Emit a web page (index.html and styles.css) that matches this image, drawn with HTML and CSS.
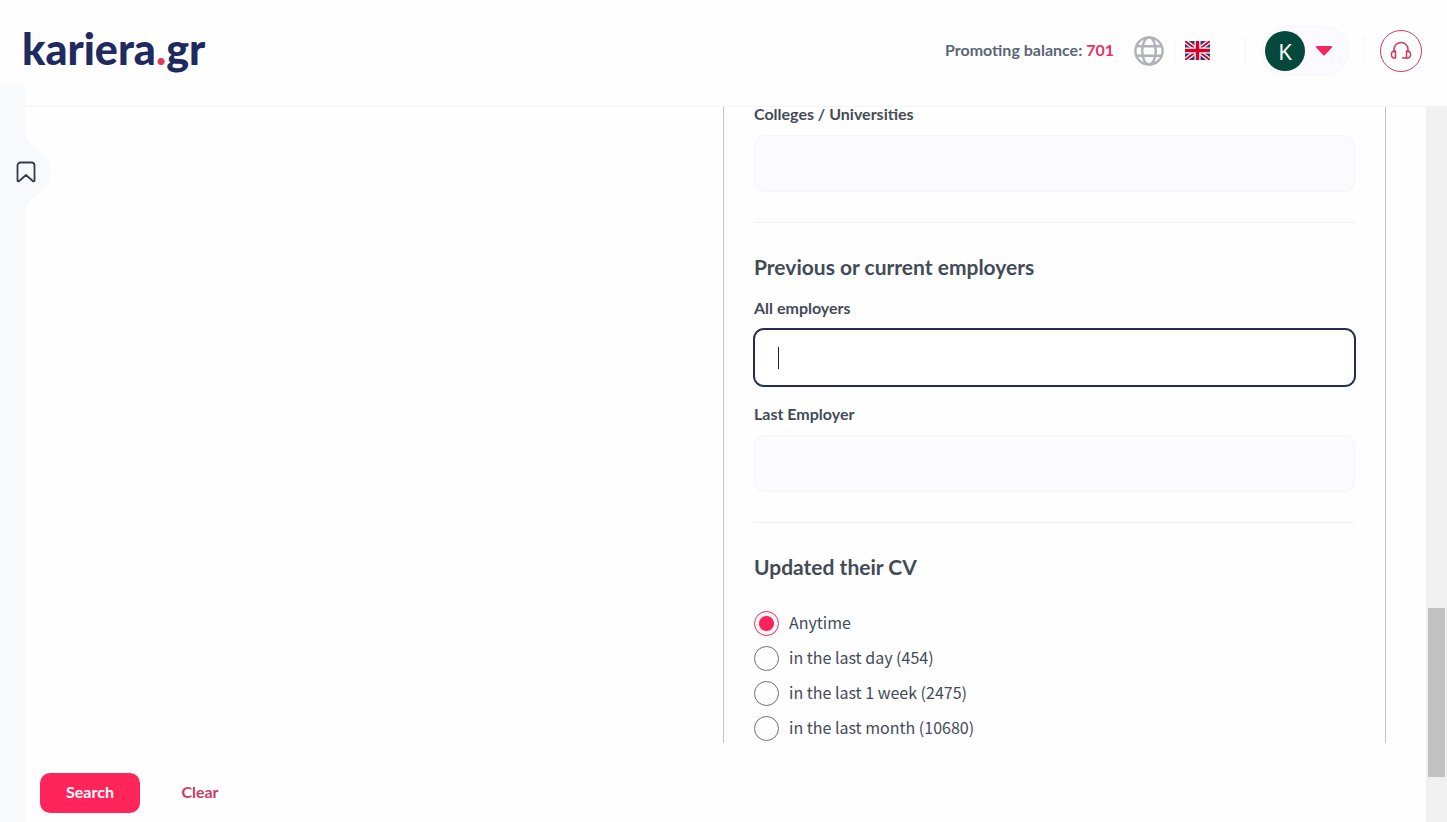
FILE: index.html
```
<!DOCTYPE html>
<html lang="en">
<head>
  <meta charset="UTF-8" />
  <meta name="viewport" content="width=device-width, initial-scale=1.0" />
  <title>CV Search - kariera.gr</title>
  <link rel="stylesheet" href="styles.css">
</head>
<body>
  <header class="header">
    <a href="#" class="logo">kariera<span class="logo-dot">.</span>gr</a>
    <div class="header-actions">
      <p class="balance">Promoting balance: <span class="balance-value">701</span></p>
      <div class="languages">
        <svg class="globe" viewBox="0 0 30 30" fill="none" stroke="#b0b1b9" stroke-width="2.4">
          <circle cx="15" cy="15" r="13.6" />
          <ellipse cx="15" cy="15" rx="6.8" ry="13.6" />
          <path d="M2.5 10.3h25M2.5 19.7h25" />
        </svg>
        <span class="divider"></span>
        <button class="icon-btn" aria-label="English">
          <svg class="flag" viewBox="0 0 50 38">
            <rect width="50" height="38" fill="#2b3a78" />
            <path d="M0 0L50 38M50 0L0 38" stroke="#fff" stroke-width="9" />
            <path d="M0 0L50 38M50 0L0 38" stroke="#d80027" stroke-width="4" />
            <path d="M25 0V38M0 19H50" stroke="#fff" stroke-width="12" />
            <path d="M25 0V38M0 19H50" stroke="#d80027" stroke-width="7" />
          </svg>
        </button>
      </div>
      <div class="account">
        <span class="divider"></span>
        <button class="profile" aria-label="Profile menu">
          <span class="avatar">K</span>
          <svg class="arrow" viewBox="0 0 18 10"><path d="M2 1h14L9 8.500z" fill="#f0285c" stroke="#f0285c" stroke-width="2" stroke-linejoin="round" /></svg>
        </button>
      </div>
      <div class="help">
        <span class="divider"></span>
        <button class="support" aria-label="Support">
          <svg class="headset" viewBox="0 0 22 20" fill="none" stroke="#cf3a62" stroke-width="1.500" stroke-linecap="round" stroke-linejoin="round">
            <path d="M4 11V8.500a7 7 0 0 1 14 0V11" />
            <path d="M5.500 10v7H4.500a3 3 0 0 1-3-3.500a3 3 0 0 1 3-3.500zM16.500 10v7H17.500a3 3 0 0 0 3-3.500a3 3 0 0 0-3-3.500z" />
            <path d="M16.500 17H12.500" />
          </svg>
        </button>
      </div>
    </div>
  </header>

  <div class="layout">
    <aside class="rail">
      <button class="saved" aria-label="Saved searches">
        <svg class="saved-shape" viewBox="0 0 26 86"><path d="M0 0C0 22 26 20 26 43S0 64 0 86z" fill="#f8f9fd" /></svg>
        <svg class="bookmark" viewBox="0 0 20 22" fill="none" stroke="#343c4c" stroke-width="1.800" stroke-linejoin="round"><path d="M4.500 1.500h11a3 3 0 0 1 3 3v15.300q-.6 1.200-1.700.2L10 14l-6.800 6q-1.100 1-1.700-.2V4.500a3 3 0 0 1 3-3z" /></svg>
      </button>
    </aside>

    <form class="search">
      <div class="search-body">
        <div class="search-main">
          <div class="columns">
            <div class="panel">
              <div class="field">
                <label for="colleges">Colleges / Universities</label>
                <input type="text" id="colleges" />
              </div>
              <hr>
              <h2>Previous or current employers</h2>
              <div class="field">
                <label for="all-employers">All employers</label>
                <input type="text" id="all-employers" class="active" />
              </div>
              <div class="field">
                <label for="last-employer">Last Employer</label>
                <input type="text" id="last-employer" />
              </div>
              <hr>
              <h2>Updated their CV</h2>
              <div class="options">
                <label class="option"><input type="radio" name="updated" checked /> Anytime</label>
                <label class="option"><input type="radio" name="updated" /> in the last day (454)</label>
                <label class="option"><input type="radio" name="updated" /> in the last 1 week (2475)</label>
                <label class="option"><input type="radio" name="updated" /> in the last month (10680)</label>
              </div>
            </div>
          </div>
          <div class="buttons">
            <button type="submit" class="btn">Search</button>
            <button type="reset" class="btn btn-clear">Clear</button>
          </div>
        </div>
        <div class="scrollbar"><div class="thumb"></div></div>
      </div>
    </form>
  </div>
</body>
</html>
```
FILE: styles.css
```
* {
  box-sizing: border-box;
}
body {
  margin: 0;
  height: 100vh;
  display: flex;
  flex-direction: column;
  overflow: hidden;
  font-family: Lato, sans-serif;
  font-weight: 700;
  background: #fefefe;
  color: #434b57;
}
button {
  font: inherit;
  border: none;
  background: none;
  padding: 0;
  cursor: pointer;
}
svg {
  display: block;
}

/* header */
.header {
  display: flex;
  align-items: center;
  justify-content: space-between;
  height: 85px;
  padding: 16px 25px 0 22px;
}
.logo {
  padding-bottom: 4px;
  font-size: 43px;
  line-height: 50px;
  font-weight: 900;
  color: #202a5e;
  text-decoration: none;
}
.logo-dot {
  color: #e0385f;
}
.header-actions, .languages, .account, .help {
  display: flex;
  align-items: center;
}
.balance {
  margin: 0 20px 0 0;
  padding-bottom: 3px;
  font-size: 16px;
  color: #5a6776;
}
.balance-value {
  color: #e8315f;
}
.divider {
  width: 1px;
  height: 30px;
  background: #f5f5f8;
}
.languages {
  gap: 10px;
  margin-right: 35px;
}
.globe {
  width: 30px;
  height: 30px;
}
.flag {
  width: 25px;
  height: 19px;
}
.account {
  gap: 15px;
  margin-right: 15px;
}
.profile {
  display: flex;
  align-items: center;
  gap: 10px;
  width: 88px;
  height: 50px;
  padding-left: 3px;
  border: 1px solid #f6f6fb;
  border-radius: 25px;
  background: #fafaff;
}
.avatar {
  width: 40px;
  height: 40px;
  border-radius: 50%;
  background: #04493b;
  color: #fff;
  font: 400 22px/40px "Noto Sans", sans-serif;
}
.arrow {
  width: 18px;
  height: 10px;
}
.help {
  gap: 15px;
}
.support {
  display: flex;
  align-items: center;
  justify-content: center;
  width: 42px;
  height: 42px;
  border: 1px solid #cf3a62;
  border-radius: 50%;
}
.headset {
  width: 22px;
  height: 20px;
}

/* left rail */
.layout {
  flex: 1;
  display: flex;
  min-height: 0;
}
.rail {
  position: relative;
  width: 25px;
  background: #f8f9fd;
}
.saved {
  position: absolute;
  top: 44px;
  left: 0;
  width: 51px;
  height: 86px;
}
.saved-shape {
  position: absolute;
  top: 0;
  right: 0;
  width: 26px;
  height: 86px;
}
.bookmark {
  position: relative;
  width: 20px;
  height: 22px;
  margin-left: 16px;
}

/* search form */
.search {
  flex: 1;
  display: flex;
  min-width: 0;
  padding-top: 21px;
}
.search-body {
  flex: 1;
  display: flex;
  min-width: 0;
  border-top: 1px solid #f5f5f8;
}
.search-main {
  flex: 1;
  display: flex;
  flex-direction: column;
}
.columns {
  flex: 1;
  min-height: 0;
  display: grid;
  grid-template-columns: 1fr 1fr;
  gap: 20px;
  padding: 0 40px 0 15px;
}
.panel {
  grid-column: 2;
  padding: 0 30px;
  border: solid #c4c4c6;
  border-width: 0 1px;
}
.field + .field {
  margin-top: 21px;
}
.field label {
  display: block;
  margin-bottom: 14px;
  font-size: 16px;
  line-height: 14px;
}
.field input {
  display: block;
  width: 100%;
  height: 57px;
  padding: 0 23px;
  border: 1px solid #f5f5fb;
  border-radius: 10px;
  background: #fafaff;
  font: 400 16px "Noto Sans CJK SC", sans-serif;
}
/* focused box with its text cursor */
.field .active {
  border-color: #242c4e;
  background: linear-gradient(#222, #222) 23px center / 1px 22px no-repeat #fff;
  box-shadow: 0 0 0 1px #242c4e;
}
hr {
  height: 1px;
  margin: 30px 0 32px;
  border: none;
  background: #f0f0f4;
}
h2 {
  margin: 0 0 22px;
  font-size: 21px;
  line-height: 24px;
}
.options {
  display: flex;
  flex-direction: column;
  gap: 10px;
  margin-top: 32px;
}
.option {
  display: flex;
  align-items: flex-start;
  gap: 10px;
  height: 25px;
  font: 400 16px/22px "Noto Sans CJK SC", sans-serif;
}
.option input {
  appearance: none;
  width: 25px;
  height: 25px;
  margin: 0;
  border: 1px solid #6b7079;
  border-radius: 50%;
}
.option input:checked {
  border-color: #c93a63;
  background: radial-gradient(#fb2458 7px, #fef3f7 8px);
}

/* bottom buttons */
.buttons {
  display: flex;
  gap: 15px;
  padding: 30px 15px 9px;
}
.btn {
  width: 100px;
  height: 40px;
  padding-bottom: 3px;
  border-radius: 10px;
  background: #ff2459;
  color: #fff;
  font-size: 16px;
}
.btn-clear {
  width: 90px;
  background: none;
  color: #cb3b66;
}

/* scrollbar */
.scrollbar {
  width: 21px;
  padding: 0 2px;
  display: flex;
  flex-direction: column;
  background: #f1f1f1;
}
.scrollbar::before {
  content: "";
  flex: 501;
}
.scrollbar::after {
  content: "";
  flex: 45;
}
.thumb {
  flex: 169;
  background: #c1c1c1;
}
```
